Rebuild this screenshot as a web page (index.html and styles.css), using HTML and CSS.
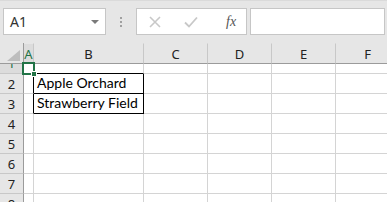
FILE: index.html
```html
<!DOCTYPE html>
<html>
<head>
<meta charset="utf-8">
<link rel="stylesheet" href="styles.css">
</head>
<body>
<div class="app">
  <div class="fbar">
    <div class="namebox"><span class="ref">A1</span><span class="caret"></span></div>
    <div class="grip"><i></i><i></i><i></i></div>
    <div class="btns">
      <svg class="ico" width="12" height="12" viewBox="0 0 12 12"><path d="M1 1 L11 11 M11 1 L1 11" stroke="#c8c8c8" stroke-width="1.6" fill="none"/></svg>
      <svg class="ico" width="14" height="12" viewBox="0 0 14 12"><path d="M1 6.5 L5 10.5 L13 1.5" stroke="#c8c8c8" stroke-width="1.8" fill="none"/></svg>
      <span class="fx">fx</span>
    </div>
    <div class="finput"></div>
  </div>
  <div class="sheet">
    <div class="corner"><svg width="13" height="11" viewBox="0 0 13 11"><path d="M13 0 L13 11 L0 11 Z" fill="#bdbdbd"/></svg></div>
    <div class="ch ch-sel">A</div>
    <div class="ch">B</div>
    <div class="ch">C</div>
    <div class="ch">D</div>
    <div class="ch">E</div>
    <div class="ch">F</div>

    <div class="rh rh-sel rh-short"><span>1</span></div>
    <div class="c c-a1 c-blk-b"><span class="handle"></span></div>
    <div class="c c-blk-b"></div>
    <div class="c"></div><div class="c"></div><div class="c"></div><div class="c"></div>

    <div class="rh">2</div>
    <div class="c c-blk-r"></div>
    <div class="c c-box">Apple Orchard</div>
    <div class="c"></div><div class="c"></div><div class="c"></div><div class="c"></div>

    <div class="rh">3</div>
    <div class="c c-blk-r"></div>
    <div class="c c-box">Strawberry Field</div>
    <div class="c"></div><div class="c"></div><div class="c"></div><div class="c"></div>

    <div class="rh">4</div>
    <div class="c"></div><div class="c"></div><div class="c"></div><div class="c"></div><div class="c"></div><div class="c"></div>

    <div class="rh">5</div>
    <div class="c"></div><div class="c"></div><div class="c"></div><div class="c"></div><div class="c"></div><div class="c"></div>

    <div class="rh">6</div>
    <div class="c"></div><div class="c"></div><div class="c"></div><div class="c"></div><div class="c"></div><div class="c"></div>

    <div class="rh">7</div>
    <div class="c"></div><div class="c"></div><div class="c"></div><div class="c"></div><div class="c"></div><div class="c"></div>

    <div class="rh">8</div>
    <div class="c"></div><div class="c"></div><div class="c"></div><div class="c"></div><div class="c"></div><div class="c"></div>
  </div>
</div>
</body>
</html>
```

FILE: styles.css
```css
* { box-sizing: border-box; }
html, body { margin: 0; padding: 0; }
body {
  width: 387px;
  height: 202px;
  overflow: hidden;
  background: #e6e6e6;
  font-family: "Noto Sans", "Liberation Sans", sans-serif;
}
.app { width: 387px; height: 202px; overflow: hidden; }

.fbar {
  height: 43px;
  display: flex;
  align-items: flex-start;
  padding-top: 8px;
  padding-left: 3px;
  border-top: 1px solid #dadada;
}
.namebox {
  width: 103px;
  height: 27px;
  background: #fff;
  border: 1px solid #c6c6c6;
  display: flex;
  align-items: center;
  justify-content: space-between;
  padding: 0 6px 0 6px;
  margin-top: -1px;
}
.ref { font-size: 14px; color: #333; }
.caret {
  width: 0; height: 0;
  border-left: 4px solid transparent;
  border-right: 4px solid transparent;
  border-top: 4px solid #7a7a7a;
  margin-top: 0px;
}
.grip {
  width: 30px;
  height: 26px;
  display: flex;
  flex-direction: column;
  align-items: center;
  justify-content: center;
  gap: 2px;
}
.grip i { width: 2px; height: 2px; background: #a0a0a0; display: block; }
.btns {
  width: 111px;
  height: 27px;
  margin-top: -1px;
  background: #fff;
  border: 1px solid #c6c6c6;
  display: flex;
  align-items: center;
  padding-left: 12px;
}
.btns .ico { display: block; }
.btns .ico + .ico { margin-left: 23px; }
.fx {
  margin-left: 28px;
  font-family: "Liberation Serif", serif;
  font-style: italic;
  font-size: 14px;
  color: #555;
}
.finput {
  flex: 1;
  height: 27px;
  margin-top: -1px;
  margin-left: 3px;
  margin-right: 2px;
  background: #fff;
  border: 1px solid #c6c6c6;
}

.sheet {
  display: grid;
  grid-template-columns: 24px 10px 110px 64px 64px 64px 64px;
  grid-template-rows: 21px 10px repeat(7, 20px);
  background: #fff;
}
.corner {
  background: #e6e6e6;
  border-right: 1px solid #9b9b9b;
  border-bottom: 1px solid #9b9b9b;
  display: flex;
  align-items: flex-end;
  justify-content: flex-end;
  padding: 0 3px 2px 0;
}
.corner svg { display: block; }
.ch {
  background: #e6e6e6;
  border-bottom: 1px solid #9b9b9b;
  border-right: 1px solid #c8c8c8;
  border-top: 1px solid #e6e6e6;
  display: flex;
  align-items: center;
  justify-content: center;
  font-size: 13px;
  color: #222;
  background-clip: padding-box;
}
.ch-sel { color: #217346; background: #dcdcdc; }
.rh {
  background: #e6e6e6;
  border-right: 1px solid #9b9b9b;
  border-bottom: 1px solid #c8c8c8;
  display: flex;
  align-items: center;
  justify-content: center;
  font-size: 13px;
  color: #222;
  line-height: 1;
  padding-top: 1px;
}
.rh-short { overflow: hidden; align-items: flex-start; padding-top: 0; }
.rh-short span { display: block; line-height: 20px; margin-top: -11px; }
.rh-sel { color: #217346; background: #dcdcdc; }
.c {
  border-right: 1px solid #d4d4d4;
  border-bottom: 1px solid #d4d4d4;
  font-family: Lato, "Liberation Sans", sans-serif;
  font-size: 14px;
  color: #000;
  white-space: nowrap;
  display: flex;
  align-items: flex-end;
  padding: 0 0 1px 3px;
  line-height: 18px;
}
.c-a1 { position: relative; overflow: visible; }
.c-a1::before {
  content: "";
  position: absolute;
  left: -2px; top: -2px; right: -2px; bottom: -2px;
  border: 2px solid #217346;
  z-index: 2;
}
.handle {
  position: absolute;
  right: -4px;
  bottom: -4px;
  width: 6px;
  height: 6px;
  background: #217346;
  border: 1px solid #fff;
  z-index: 3;
}
.c-blk-b { border-bottom-color: #000; }
.c-blk-r { border-right-color: #000; }
.c-box { border-right-color: #000; border-bottom-color: #000; }
```
